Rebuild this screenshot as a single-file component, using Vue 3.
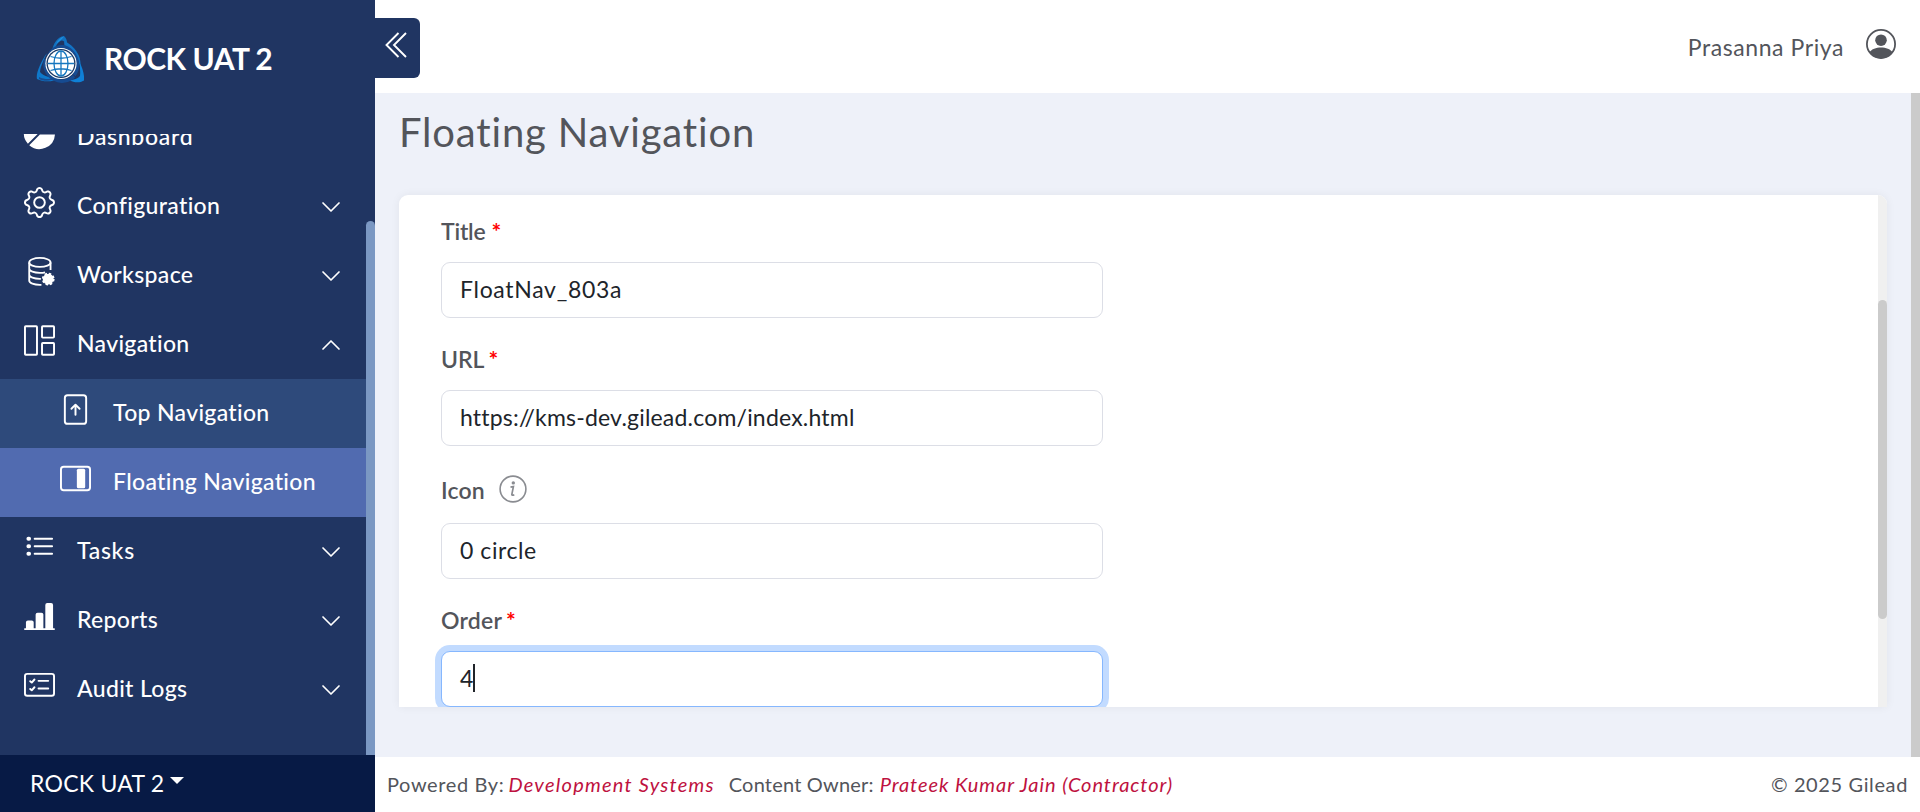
<script setup>
const icons = {
  pie: 'M15.985 8.5H8.207l-5.5 5.5a8 8 0 0 0 13.277-5.5zM2 13.292A8 8 0 0 1 7.5.015v7.778l-5.5 5.5zM8.5.015V7.5h7.485A8 8 0 0 0 8.5.015z',
  gear: 'M8 4.754a3.246 3.246 0 1 0 0 6.492 3.246 3.246 0 0 0 0-6.492M5.754 8a2.246 2.246 0 1 1 4.492 0 2.246 2.246 0 0 1-4.492 0M9.796 1.343c-.527-1.79-3.065-1.79-3.592 0l-.094.319a.873.873 0 0 1-1.255.52l-.292-.16c-1.64-.892-3.433.902-2.54 2.541l.159.292a.873.873 0 0 1-.52 1.255l-.319.094c-1.79.527-1.79 3.065 0 3.592l.319.094a.873.873 0 0 1 .52 1.255l-.16.292c-.892 1.64.901 3.434 2.541 2.54l.292-.159a.873.873 0 0 1 1.255.52l.094.319c.527 1.79 3.065 1.79 3.592 0l.094-.319a.873.873 0 0 1 1.255-.52l.292.16c1.64.893 3.434-.902 2.54-2.541l-.159-.292a.873.873 0 0 1 .52-1.255l.319-.094c1.79-.527 1.79-3.065 0-3.592l-.319-.094a.873.873 0 0 1-.52-1.255l.16-.292c.893-1.64-.902-3.433-2.541-2.54l-.292.159a.873.873 0 0 1-1.255-.52zm-2.633.283c.246-.835 1.428-.835 1.674 0l.094.319a1.873 1.873 0 0 0 2.693 1.115l.291-.16c.764-.415 1.6.42 1.184 1.185l-.159.292a1.873 1.873 0 0 0 1.116 2.692l.318.094c.835.246.835 1.428 0 1.674l-.319.094a1.873 1.873 0 0 0-1.115 2.693l.16.291c.415.764-.42 1.6-1.185 1.184l-.291-.159a1.873 1.873 0 0 0-2.693 1.116l-.094.318c-.246.835-1.428.835-1.674 0l-.094-.319a1.873 1.873 0 0 0-2.692-1.115l-.292.16c-.764.415-1.6-.42-1.184-1.185l.159-.291A1.873 1.873 0 0 0 1.945 8.93l-.319-.094c-.835-.246-.835-1.428 0-1.674l.319-.094A1.873 1.873 0 0 0 3.06 4.377l-.16-.292c-.415-.764.42-1.6 1.185-1.184l.292.159a1.873 1.873 0 0 0 2.692-1.115z',
  bars: 'M11 2a1 1 0 0 1 1-1h2a1 1 0 0 1 1 1v12h.5a.5.5 0 0 1 0 1H.5a.5.5 0 0 1 0-1H1v-3a1 1 0 0 1 1-1h2a1 1 0 0 1 1 1v3h1V7a1 1 0 0 1 1-1h2a1 1 0 0 1 1 1v7h1z',
}

const menu = [
  { label: 'Dashboard', icon: 'pie', cls: 'wide' },
  { label: 'Configuration', icon: 'gear', arrow: 'down' },
  { label: 'Workspace', icon: 'db', arrow: 'down' },
  { label: 'Navigation', icon: 'layout', arrow: 'up' },
  { label: 'Top Navigation', icon: 'top', cls: 'sub' },
  { label: 'Floating Navigation', icon: 'side', cls: 'sub active' },
  { label: 'Tasks', icon: 'list', arrow: 'down', cls: 'wide' },
  { label: 'Reports', icon: 'bars', arrow: 'down' },
  { label: 'Audit Logs', icon: 'checks', arrow: 'down' },
]

const fields = [
  { label: 'Title', required: true, value: 'FloatNav_803a', cls: 'title' },
  { label: 'URL', required: true, value: 'https://kms-dev.gilead.com/index.html', cls: 'url' },
  { label: 'Icon', info: true, value: '0 circle', cls: 'icon-field' },
  { label: 'Order', required: true, value: '4', cls: 'order', focused: true },
]
</script>

<template>
  <div class="app">
    <aside class="sidebar">
      <div class="brand">
        <svg class="logo" viewBox="0 0 48 48">
          <path d="M15.500 17C17 7 22 .5 28 0 30.500 2 31 5 31.500 9 29.500 6 27.500 4.500 25.500 4.500 21.500 6 19 11 18 17z" fill="#1271c0" />
          <path d="M20 8C22 4 24.500 1.500 28 .5 26.500 3 25 3.500 23 5.500z" fill="#1d90e0" />
          <path d="M28 5C39 10 45.500 20 44.500 30 41 20 36 13 28.500 10z" fill="#1373c4" />
          <path d="M43 25C47 33 48.500 39 48 44.500 43 47.500 38 46.500 33 44 38 44 42 42.500 44 40 44.500 35 44 30 43 25z" fill="#0f80d6" />
          <path d="M11 17C8 24 4.500 30 4 36 8 40.500 15 42.500 24 42 17 46 8 46.500 1 43 -.5 38 5 25 11 17z" fill="#0f78ca" />
          <path d="M3 41C8 43.500 14 43.500 20 42 16 45 8 46 3 43z" fill="#174d93" />
          <g fill="none" stroke="#164b91">
            <path d="M13 20C17 10 29 8 36 16C42 23 43 32 38 39" stroke-width="4" />
            <path d="M10 23C7 31 11 39 18 43C25 47 33 45 38 40" stroke-width="3.500" />
          </g>
          <circle cx="25" cy="27.500" r="15.600" fill="#fff" />
          <circle cx="25" cy="27.500" r="14.500" fill="#193864" />
          <circle cx="25" cy="27.500" r="13.200" fill="#fff" />
          <g fill="none" stroke="#1677bf" stroke-width="1.300">
            <path d="M25 15V40M12 27.500H38M14.500 20.500Q25 24 35.500 20.500M14.500 34.500Q25 31 35.500 34.500" />
            <ellipse cx="25" cy="27.500" rx="7" ry="12.500" />
          </g>
        </svg>
        <strong>ROCK UAT 2</strong>
      </div>

      <div class="scroller">
        <nav class="menu">
          <a v-for="m in menu" :key="m.label" class="row" :class="m.cls">
            <svg class="ico" viewBox="0 0 16 16">
              <path v-if="icons[m.icon]" :d="icons[m.icon]" fill="#fff" />
              <g v-else-if="m.icon === 'db'" fill="none" stroke="#fff" stroke-width=".95">
                <ellipse cx="8.200" cy="3.300" rx="5.500" ry="2.300" />
                <path d="M2.700 3.300v9.400c0 1.300 2.500 2.200 5.500 2.200h.8M13.700 3.300v3.900M2.700 6.500c0 1.300 2.500 2.200 5.500 2.200 1 0 2-.1 2.700-.3M2.700 9.600c0 1.300 2.500 2.200 5.500 2.200h.5" />
                <circle cx="12.500" cy="11.900" r="2.800" fill="#fff" stroke="none" />
                <circle cx="12.500" cy="11.900" r="2.750" stroke-width="1.100" stroke-dasharray="1.200 .96" />
              </g>
              <g v-else-if="m.icon === 'layout'" fill="none" stroke="#fff">
                <rect x=".5" y=".6" width="6.200" height="14.800" rx=".4" />
                <rect x="9.300" y=".6" width="6.200" height="5.900" rx=".4" />
                <rect x="9.300" y="9.300" width="6.200" height="6.100" rx=".4" />
              </g>
              <g v-else-if="m.icon === 'top'" fill="none" stroke="#fff">
                <rect x="2.500" y=".6" width="11" height="14.800" rx="1.400" />
                <path d="M8 10.700V5.800M5.900 7.600 8 5.500l2.100 2.100" stroke-linecap="round" stroke-linejoin="round" />
              </g>
              <g v-else-if="m.icon === 'side'" fill="none" stroke="#fff">
                <rect x=".5" y="1.900" width="15" height="12.200" rx="1.400" />
                <rect x="8.700" y="3" width="4.300" height="10" rx=".8" fill="#fff" stroke="none" />
              </g>
              <g v-else-if="m.icon === 'list'" fill="none" stroke="#fff" stroke-linecap="round">
                <path d="M5.500 3.500h9M5.500 7.400h9M5.500 11.200h9" />
                <path d="M2.300 3.500h.3M2.300 7.400h.3M2.300 11.200h.3" stroke-width="2.100" />
              </g>
              <g v-else fill="none" stroke="#fff" stroke-linecap="round" stroke-linejoin="round">
                <rect x=".5" y="2" width="15" height="11.300" rx="1.200" />
                <path d="M7.500 5.600h5M7.500 9.500h5M3.200 5.800l.8.700 1.400-1.600M3.200 9.800l.8.700 1.400-1.600" />
              </g>
            </svg>
            <span>{{ m.label }}</span>
            <svg v-if="m.arrow" class="arrow" :class="m.arrow" viewBox="0 0 18 10">
              <path d="M1 1l8 8 8-8" fill="none" stroke="#fff" stroke-width="1.700" stroke-linecap="round" stroke-linejoin="round" />
            </svg>
          </a>
        </nav>
        <div class="track"><div class="thumb"></div></div>
      </div>

      <div class="env">ROCK UAT 2<i class="caret"></i></div>
    </aside>

    <div class="page">
      <header class="topbar">
        <button class="collapse" type="button" aria-label="Collapse menu">
          <svg viewBox="0 0 22 26">
            <path d="M13.500 1 1.500 13l12 12M21 1 9 13l12 12" fill="none" stroke="#fff" stroke-width="1.900" />
          </svg>
        </button>
        <span class="user">Prasanna Priya</span>
        <svg class="avatar" viewBox="0 0 30 30">
          <circle cx="15" cy="15" r="14.100" fill="none" stroke="#53555b" stroke-width="1.800" />
          <circle cx="15" cy="11.200" r="5.800" fill="#53555b" />
          <path d="M3.300 23.500C5.800 20 10 18.600 15 18.600S24.200 20 26.700 23.500A14.500 14.500 0 0 1 3.300 23.500z" fill="#53555b" />
        </svg>
      </header>

      <main class="content">
        <div class="body">
          <h1>Floating Navigation</h1>
          <section class="card">
            <form class="form">
              <div v-for="f in fields" :key="f.label" class="field" :class="[f.cls, { focused: f.focused }]">
                <label>
                  <span class="name">{{ f.label }}</span>
                  <span v-if="f.required" class="star">*</span>
                  <svg v-if="f.info" class="info" viewBox="0 0 28 28">
                    <circle cx="14" cy="14" r="12.900" fill="none" stroke="#8a8c91" stroke-width="1.600" />
                    <circle cx="14.300" cy="7.900" r="1.700" fill="#8a8c91" />
                    <path d="M11.500 12.200 14.400 11.600 12.800 19.500Q12.700 20.600 15.300 19.900" fill="none" stroke="#8a8c91" stroke-width="1.700" />
                  </svg>
                </label>
                <div class="input"><span>{{ f.value }}</span><i v-if="f.focused" class="cursor"></i></div>
              </div>
            </form>
            <div class="card-track"><div class="card-thumb"></div></div>
          </section>
        </div>
        <div class="page-scroll"></div>
      </main>

      <footer class="footer">
        <span class="powered">Powered By:</span>
        <em class="dev">Development Systems</em>
        <span class="owner">Content Owner:</span>
        <em class="person">Prateek Kumar Jain (Contractor)</em>
        <span class="copy">© 2025 Gilead</span>
      </footer>
    </div>
  </div>
</template>

<style scoped>
* { box-sizing: border-box; }
.app { display: flex; width: 100%; height: 812px; overflow: hidden; background: #fff; color: #53555b; font-family: Lato, "Open Sans", sans-serif; font-size: 23px; font-variant-ligatures: none; }
.sidebar { flex: none; display: flex; flex-direction: column; width: 375px; background: #203562; color: #fff; }
.brand { flex: none; display: flex; align-items: flex-start; height: 134px; padding: 36px 0 0 36px; }
.logo { width: 48px; height: 48px; }
.brand strong { margin-left: 20px; font-size: 30px; line-height: 44px; letter-spacing: -.5px; }
.scroller { flex: 1; min-height: 0; display: flex; overflow: hidden; }
.menu { flex: 1; margin-top: -31px; }
.row { display: flex; align-items: center; height: 69px; padding: 0 26px 0 24px; }
.ico { flex: none; width: 31px; height: 31px; margin: 0 22px 8px 0; overflow: visible; }
.row span { flex: 1; padding-bottom: 3px; font-weight: 500; letter-spacing: .33px; white-space: nowrap; }
.row.wide span { letter-spacing: .7px; }
.row.sub { padding-left: 60px; background: #2e4a7b; }
.row.active { background: #516bb0; }
.arrow { width: 18px; height: 10px; overflow: visible; }
.arrow.up { transform: rotate(180deg); }
.track { flex: none; width: 9px; padding-top: 87px; }
.thumb { height: 100%; background: #7b98c3; border-radius: 5px 5px 0 0; }
.env { flex: none; display: flex; align-items: center; height: 57px; padding: 0 0 1px 30px; background: #071a45; letter-spacing: .25px; }
.caret { margin: -5px 0 0 6px; border: 7px solid transparent; border-top-color: #fff; border-bottom-width: 0; }
.page { flex: 1; min-width: 0; display: flex; flex-direction: column; }
.topbar { flex: none; display: flex; align-items: center; height: 93px; padding-right: 24px; }
.collapse { display: flex; align-items: center; justify-content: center; width: 45px; height: 60px; margin: 3px auto 0 0; padding: 0 3px 6px 0; border: 0; border-radius: 0 6px 6px 0; background: #203562; }
.collapse svg { width: 22px; height: 26px; }
.user { letter-spacing: .58px; }
.avatar { width: 30px; height: 30px; margin: 0 0 5px 22px; }
.content { flex: 1; min-height: 0; display: flex; background: #eef1f9; }
.body { flex: 1; padding: 16px 24px 49px 24px; }
h1 { height: 86px; margin: 0; font-size: 40px; line-height: 46px; font-weight: 400; letter-spacing: .83px; }
.card { display: flex; height: 512px; overflow: hidden; background: #fff; border-radius: 9px 9px 0 0; box-shadow: 0 0 10px rgba(0, 0, 0, .06); }
.form { flex: 1; padding: 24px 0 0 42px; }
.field { width: 662px; margin-bottom: 29px; }
.field label { display: flex; height: 24px; margin-bottom: 19px; line-height: 24px; font-weight: 600; }
.star { margin-left: 6px; color: #f00; font-weight: 700; }
.title .name { letter-spacing: -.2px; }
.url .star, .order .star { margin-left: 4px; }
.order .name { letter-spacing: .2px; }
.icon-field { margin-top: 32px; }
.icon-field label { margin-bottom: 21px; }
.icon-field .name { letter-spacing: .2px; }
.info { width: 28px; height: 28px; margin: -3px 0 0 14px; }
.input { display: flex; align-items: center; height: 56px; padding: 0 0 3px 18px; border: 1px solid #dcdee6; border-radius: 9px; color: #20242a; background: #fff; }
.title .input { letter-spacing: .7px; }
.url .input { letter-spacing: .2px; }
.icon-field .input { letter-spacing: .57px; }
.focused .input { border-color: #86b7fe; box-shadow: 0 0 0 6px #c2dbff; }
.cursor { width: 2px; height: 28px; background: #20242a; }
.card-track { flex: none; width: 9px; padding-top: 105px; background: #f0f0f0; }
.card-thumb { height: 319px; border-radius: 5px; background: #cbcbcb; }
.page-scroll { flex: none; width: 9px; background: #cbcbcb; }
.footer { flex: none; display: flex; align-items: center; height: 55px; padding: 0 12px 1px 12px; font-size: 20px; letter-spacing: .62px; }
.footer em { color: #be1140; }
.footer .dev { margin-left: 4px; letter-spacing: 1.25px; }
.owner { margin-left: 14px; letter-spacing: .19px; }
.footer .person { margin-left: 6px; letter-spacing: .95px; }
.copy { margin-left: auto; }
</style>
<style>
body { margin: 0; overflow: hidden; }
</style>
